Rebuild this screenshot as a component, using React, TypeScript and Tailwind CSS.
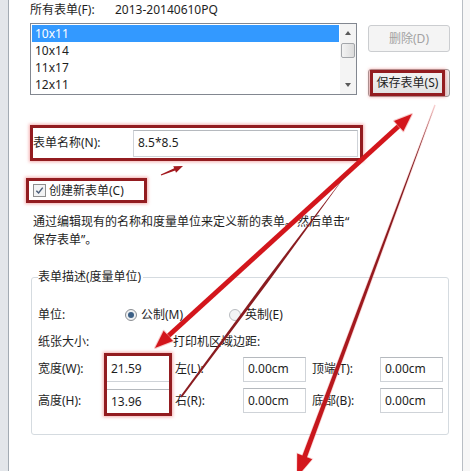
// 页面设置 -> 表单编辑对话框（带红色标注箭头的截图）
import React from "react";

// 红框：截图里手工加的深红描边，外面带一圈淡粉色光晕
const RED_BOX =
  "border-[3px] border-[#931c20] shadow-[0_0_3px_1px_rgba(235,110,110,0.55)]";

const LIST_ITEMS = ["10x11", "10x14", "11x17", "12x11"];

function Field({ value, className = "" }: { value: string; className?: string }) {
  return (
    <div
      className={`flex items-center border border-[#cfd3d8] border-t-[#b5b9be] bg-white pl-[4px] ${className}`}
    >
      {value}
    </div>
  );
}

function Radio({ checked, label }: { checked: boolean; label: string }) {
  return (
    <div className="flex items-center gap-[4px]">
      <span
        className={`flex h-[12px] w-[12px] items-center justify-center rounded-full border ${
          checked
            ? "border-[#8c8f93] bg-[#eef0f2]"
            : "border-[#b9bcc0] bg-[#f3f4f5]"
        }`}
      >
        {checked ? <span className="h-[6px] w-[6px] rounded-full bg-[#3c5f85]" /> : null}
      </span>
      <span>{label}</span>
    </div>
  );
}

function ListBox() {
  return (
    <div className="flex h-[72px] w-[327px] shrink-0 border border-[#828790] bg-white">
      <div className="flex-1 pt-px">
        {LIST_ITEMS.map((item, i) => (
          <div
            key={item}
            className={`mx-px flex h-[17px] items-center px-[3px] ${
              i === 0 ? "bg-[#3399ff] text-white" : ""
            }`}
          >
            {item}
          </div>
        ))}
      </div>
      {/* 滚动条 */}
      <div className="flex w-[16px] flex-col bg-[#f4f4f4]">
        <div className="flex h-[18px] items-center justify-center">
          <span className="h-0 w-0 border-x-[3.5px] border-b-[4px] border-x-transparent border-b-[#5a5a5a]" />
        </div>
        <div className="mx-px mt-px h-[15px] rounded-[2px] border border-[#a3a6aa] bg-[linear-gradient(90deg,#f3f3f3,#dcdcdc)]" />
        <div className="mt-auto flex h-[18px] items-center justify-center">
          <span className="h-0 w-0 border-x-[3.5px] border-t-[4px] border-x-transparent border-t-[#5a5a5a]" />
        </div>
      </div>
    </div>
  );
}

function Arrows() {
  return (
    <svg
      className="pointer-events-none absolute left-0 top-0 h-[471px] w-[470px]"
      viewBox="0 0 470 471"
    >
      <defs>
        <linearGradient id="tail" x1="435" y1="105" x2="297" y2="477" gradientUnits="userSpaceOnUse">
          <stop offset="0" stopColor="#6e1a1d" />
          <stop offset="0.55" stopColor="#9e1a1f" />
          <stop offset="1" stopColor="#d8161c" />
        </linearGradient>
      </defs>

      {/* 双向粗箭头：保存表单 <-> 宽度/高度 */}
      <g stroke="#f29a9a" strokeOpacity="0.5" strokeWidth="2" strokeLinejoin="round" paintOrder="stroke">
        <line x1="166" y1="338" x2="401" y2="124" stroke="#d3161c" strokeWidth="5" strokeOpacity="1" />
        <polygon points="412,114 403.4,131.3 394,120.9" fill="#d3161c" />
        <polygon points="155,348 163.6,330.7 173,341.1" fill="#d3161c" />
      </g>

      {/* 细线 */}
      <polygon
        points="351,168 267.2,283.4 181.8,397.6 180.2,396.4 264.8,281.6"
        fill="#8a1c20"
      />

      {/* 右侧渐粗箭头 */}
      <polygon
        points="435,105 364.1,300.5 307,457.3 312.2,459.2 297,477 297.2,453.6 302.4,455.5 361.3,299.5"
        fill="url(#tail)"
        stroke="#f29a9a"
        strokeOpacity="0.45"
        strokeWidth="1.5"
        paintOrder="stroke"
      />

      {/* 小箭头 */}
      <polygon
        points="161.2,175.6 175.2,170.5 176,172.8 183,166 173.2,166.2 174.2,168.3 160.8,174.4"
        fill="#a3191e"
      />
    </svg>
  );
}

export default function App() {
  return (
    <div className="relative flex h-[471px] w-[470px] overflow-hidden bg-white font-[family-name:'Noto_Sans','Noto_Sans_CJK_SC',sans-serif] text-[12px] leading-[16px] text-[#1e1e1e]">
      {/* 左侧窗口边框 */}
      <div className="w-[8px] shrink-0 bg-[#e3e6ea]" />
      <div className="w-px shrink-0 bg-[#a3abb3]" />

      <div className="w-[453px] shrink-0 pl-[21px] pt-[2px]">
        <div className="flex h-[16px] items-center">
          <span className="w-[85px]">所有表单(F):</span>
          <span>2013-20140610PQ</span>
        </div>

        {/* 列表 + 按钮 */}
        <div className="mt-[5px] flex items-start">
          <ListBox />
          <div className="ml-[11px] flex w-[82px] flex-col">
            <div className="mt-[2px] flex h-[27px] items-center justify-center rounded-[3px] border border-[#cbcdd0] bg-[#f4f4f4] text-[#a2a2a2]">
              删除(D)
            </div>
            <div className="mt-[17px] flex h-[28px] items-center rounded-[3px] border border-[#9a9a9a] bg-[linear-gradient(#f4f4f4,#e0e0e0)] pl-px">
              <div className={`flex h-full w-[75px] items-center justify-center ${RED_BOX}`}>
                保存表单(S)
              </div>
            </div>
          </div>
        </div>

        {/* 表单名称 */}
        <div className={`mt-[28px] flex h-[36px] w-[333px] items-center ${RED_BOX}`}>
          <span className="w-[100px]">表单名称(N):</span>
          <Field value="8.5*8.5" className="h-[27px] w-[225px]" />
        </div>

        {/* 创建新表单 */}
        <div className={`-ml-[4px] mt-[17px] flex h-[25px] w-[121px] items-center gap-[3px] pl-[4px] ${RED_BOX}`}>
          <span className="flex h-[13px] w-[13px] items-center justify-center border border-[#8e8f8f] bg-[#f2f3f4]">
            <svg viewBox="0 0 10 10" className="h-[9px] w-[9px]">
              <path d="M1.5 5.2 L4 7.8 L8.6 1.8" fill="none" stroke="#4a5d78" strokeWidth="1.6" />
            </svg>
          </span>
          <span>创建新表单(C)</span>
        </div>

        <div className="mt-[10px] pl-[3px] leading-[18px]">
          <div>通过编辑现有的名称和度量单位来定义新的表单。然后单击“</div>
          <div>保存表单”。</div>
        </div>

        {/* 表单描述 */}
        <fieldset className="ml-px mt-[20px] w-[418px] rounded-[3px] border border-[#d5dbe0] pb-[18px] pl-[6px]">
          <legend className="bg-white pr-[2px] leading-[16px]">表单描述(度量单位)</legend>

          <div className="mt-[20px] flex h-[20px] items-center">
            <span className="w-[87px]">单位:</span>
            <div className="w-[104px]">
              <Radio checked label="公制(M)" />
            </div>
            <Radio checked={false} label="英制(E)" />
          </div>

          <div className="mt-[7px] flex h-[20px] items-center">
            <span className="w-[135px]">纸张大小:</span>
            <span>打印机区域边距:</span>
          </div>

          <div className="mt-px grid grid-cols-[66px_68px_71px_63px_74px_63px] grid-rows-[32px_31px]">
            <div className="flex items-center">宽度(W):</div>
            <div className={`row-span-2 flex h-[63px] flex-col ${RED_BOX}`}>
              <Field value="21.59" className="h-[26px] border-x-0 border-t-0" />
              <Field value="13.96" className="mt-[7px] h-[24px] border-x-0 border-b-0" />
            </div>
            <div className="flex items-center pl-[3px]">左(L):</div>
            <div className="flex items-center">
              <Field value="0.00cm" className="h-[25px] w-[63px]" />
            </div>
            <div className="flex items-center pl-[6px]">顶端(T):</div>
            <div className="flex items-center">
              <Field value="0.00cm" className="h-[25px] w-[63px]" />
            </div>

            <div className="flex items-center">高度(H):</div>
            <div className="flex items-center pl-[3px]">右(R):</div>
            <div className="flex items-center">
              <Field value="0.00cm" className="h-[25px] w-[63px]" />
            </div>
            <div className="flex items-center pl-[6px]">底部(B):</div>
            <div className="flex items-center">
              <Field value="0.00cm" className="h-[25px] w-[63px]" />
            </div>
          </div>
        </fieldset>
      </div>

      {/* 右侧边框 */}
      <div className="w-px shrink-0 bg-[#b9bec4]" />
      <div className="flex-1 bg-[#f7f7f7]" />

      <Arrows />
    </div>
  );
}
